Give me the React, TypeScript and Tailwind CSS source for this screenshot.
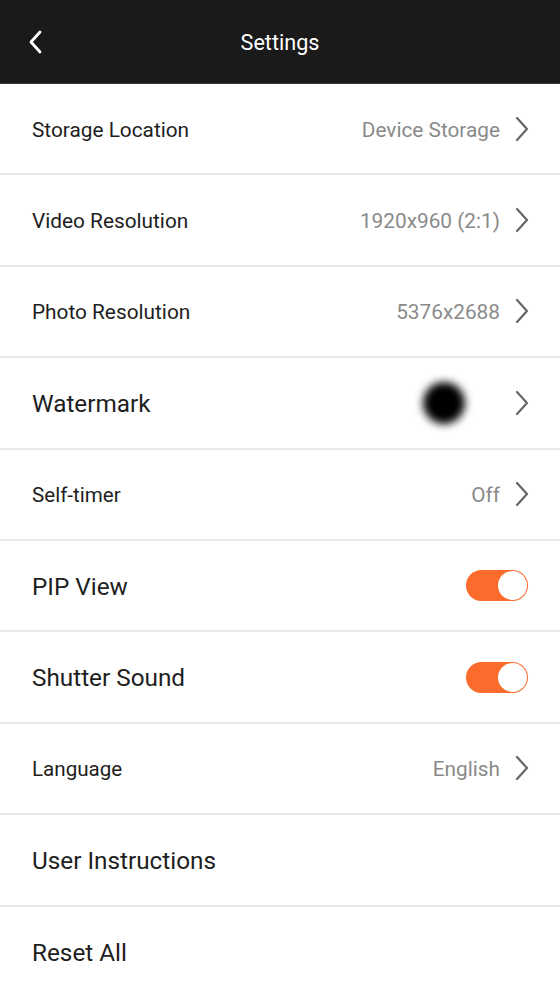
import React from "react";

const Chevron = () => (
  <svg width="16" height="26" viewBox="0 0 16 26" className="ml-[14px] shrink-0">
    <path d="M3 2 L13 13 L3 24" fill="none" stroke="#666" strokeWidth="2.2" strokeLinecap="round" strokeLinejoin="round" />
  </svg>
);

const Toggle = () => (
  <div className="w-[62px] h-[31px] rounded-full bg-[#fb6c2c] relative mr-[2px]">
    <div className="absolute right-[1px] top-[1px] w-[29px] h-[29px] rounded-full bg-white" />
  </div>
);

type Row = { label: string; size: string; value?: string; chevron?: boolean; toggle?: boolean; watermark?: boolean };

const rows: Row[] = [
  { label: "Storage Location", size: "text-[20.8px]", value: "Device Storage", chevron: true },
  { label: "Video Resolution", size: "text-[20.8px]", value: "1920x960 (2:1)", chevron: true },
  { label: "Photo Resolution", size: "text-[20.8px]", value: "5376x2688", chevron: true },
  { label: "Watermark", size: "text-[24.3px]", watermark: true, chevron: true },
  { label: "Self-timer", size: "text-[20.6px]", value: "Off", chevron: true },
  { label: "PIP View", size: "text-[24.3px]", toggle: true },
  { label: "Shutter Sound", size: "text-[24.3px]", toggle: true },
  { label: "Language", size: "text-[20.6px]", value: "English", chevron: true },
  { label: "User Instructions", size: "text-[24.3px]" },
  { label: "Reset All", size: "text-[24.3px]" },
];

export default function App() {
  return (
    <div className="w-[560px] h-[996px] bg-white overflow-hidden" style={{ fontFamily: "Roboto, 'Noto Sans', sans-serif" }}>
      <div className="h-[84px] bg-[#1a1a1a] border-b border-[#3a3a3a] flex items-center relative">
        <svg width="16" height="24" viewBox="0 0 16 24" className="absolute left-[28px] top-[30px]">
          <path d="M12 2 L3 12 L12 22" fill="none" stroke="#fff" strokeWidth="2.8" strokeLinecap="round" strokeLinejoin="round" />
        </svg>
        <div className="w-full text-center text-white text-[21.6px] pt-[3px]">Settings</div>
      </div>
      {rows.map((r, i) => (
        <div key={i} className={`h-[91.4px] flex items-center pl-[32px] pr-[30px] ${i < rows.length - 1 ? "border-b-2 border-[#e8e8e8]" : ""}`}>
          <div className={`flex-1 text-[#1e1e1e] pt-[3px] ${r.size}`}>{r.label}</div>
          {r.value && <div className="text-[#8a8a8a] text-[20.8px] pt-[3px]">{r.value}</div>}
          {r.watermark && (
            <div className="w-[60px] h-[60px] flex items-center justify-center mr-[26px]">
              <div className="w-[42px] h-[42px] rounded-full bg-black blur-[4px]" />
            </div>
          )}
          {r.chevron && <Chevron />}
          {r.toggle && <Toggle />}
        </div>
      ))}
    </div>
  );
}
